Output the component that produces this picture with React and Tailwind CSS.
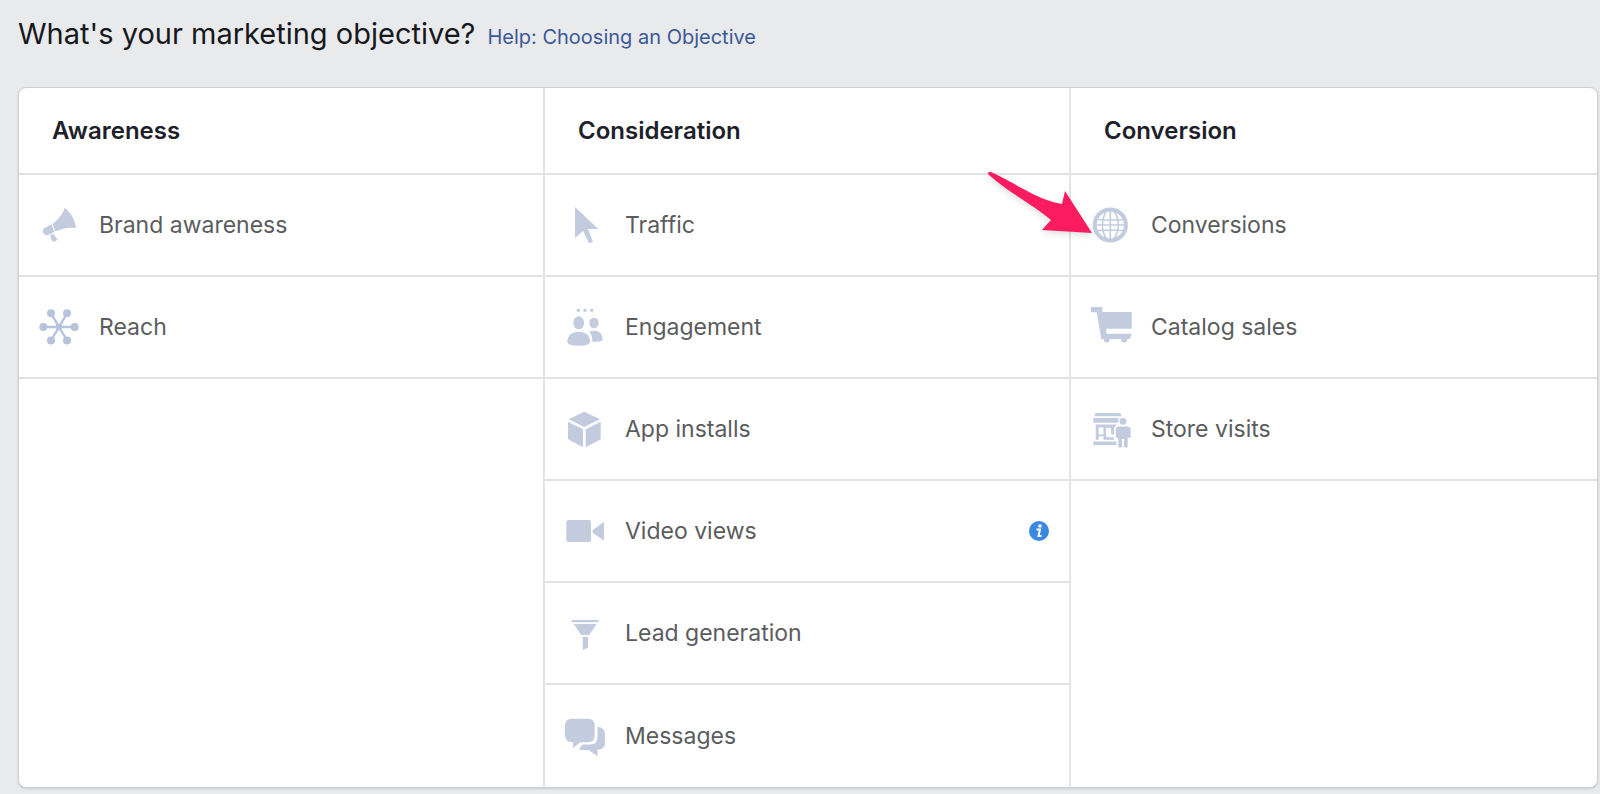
import React from 'react';

const icons = {
  megaphone: (
    <>
      <path d="M25.7 2.7C32 8 36.500 15 37 23C30 22 23 23.500 16 26.500L13.700 18.700C19 14.500 23.500 9.500 25.700 2.700Z" />
      <path d="M12.500 19.300L15.300 27L9 30Q6.500 31 5 29Q3 26.500 4 24.500Q4.500 23.500 6 22.700Z" />
      <path d="M11 30.300L14.300 28.700L18.500 34.500L15.300 37L12.700 35.500Z" />
    </>
  ),
  reach: (
    <g className="text-[#b7c3dc]" fill="currentColor">
      <path d="M4 20H36M12 6.300L28 33.500M28 6.300L12 33.500" fill="none" stroke="currentColor" strokeWidth="2.400" />
      <circle cx="20" cy="20" r="3.300" />
      <circle cx="4.300" cy="20" r="4" />
      <circle cx="35.700" cy="20" r="4" />
      <circle cx="12" cy="6.300" r="4" />
      <circle cx="28" cy="6.300" r="4" />
      <circle cx="12" cy="33.500" r="4" />
      <circle cx="28" cy="33.500" r="4" />
    </g>
  ),
  cursor: <path d="M10 2L33.300 24H23L28 36.700L24 38.300L18 26L10 33Z" />,
  people: (
    <>
      <circle cx="13.300" cy="3.300" r="1.700" />
      <circle cx="20" cy="3.300" r="1.700" />
      <circle cx="26.700" cy="3.300" r="1.700" />
      <ellipse cx="13.700" cy="15.800" rx="5.500" ry="6.500" />
      <ellipse cx="29" cy="16" rx="4.700" ry="5.200" />
      <path d="M2.300 35C2.300 28 7 24.700 13.700 24.700S25 28 25 35Q25 38.700 13.700 38.700T2.300 35Z" />
      <path d="M24 24.500C31 22.500 37.700 24.500 37.700 32.500Q37.700 35 27.300 34.700Q27.500 28 24 24.500Z" />
    </>
  ),
  cube: (
    <path d="M19.300 2.700L35 10.200L19.300 18L3.700 10.200ZM3 12.700L18 20.300V38.300L3 30.300ZM20.700 20.300L35.700 12.700V30.300L20.700 38.300Z" />
  ),
  video: (
    <>
      <rect x="1.300" y="9" width="24.700" height="22" rx="2" />
      <path d="M39 10.700V29.700L28 22Q26.700 20.300 28 18.700Z" />
    </>
  ),
  funnel: <path d="M6.700 7H33.700V9.200H6.700ZM8.700 11H31.700L24.300 22H16.300ZM17.700 23.700H23V34.700L17.700 37.300Z" />,
  messages: (
    <>
      <path d="M7 2.700H22.700Q29.700 2.700 29.700 9.700V19.300Q29.700 26.300 22.700 26.300H15.300L8 32V26.300Q0 26.300 0 19.300V9.700Q0 2.700 7 2.700Z" />
      <path d="M32.500 10.700Q40 11.500 40 18V27Q40 33 32.500 34V40L23.500 34H17Q14.300 34 14.300 32.500L18 28.500H25Q32.500 28.500 32.500 21Z" />
    </>
  ),
  globe: (
    <g fill="none" stroke="currentColor">
      <circle cx="19.300" cy="20" r="15.600" strokeWidth="4" />
      <path d="M19.300 5V35M4.500 20H34M6.500 14.500Q19.300 15.500 32 14.500M6.500 25.500Q19.300 24.500 32 25.500" strokeWidth="1.600" />
      <ellipse cx="19.300" cy="20" rx="8" ry="15" strokeWidth="1.600" />
    </g>
  ),
  cart: (
    <>
      <path d="M0 0H11.300V5H40.700V21.700H15.300V26.700H40.700L39 32H10.300L5.700 5.300H0Z" />
      <circle cx="15.700" cy="32.500" r="3" />
      <circle cx="33.300" cy="32.500" r="3" />
    </>
  ),
  store: (
    <>
      <path d="M5 4H28.500Q30 4 30.500 7.300H3.500Q4 4 5 4ZM2.300 9H28Q27 11 27.200 13.700H3.500Q2.300 13.700 2.300 12ZM2.300 32.500H25.500V36H2.300Z" />
      <path
        fillRule="evenodd"
        d="M4.700 15.500H26L24 17.500Q23 19 23 21V30.700H4.700ZM7.700 18.500V25.500H12.500V18.500ZM7.700 27.300V30.700H12.500V27.300ZM15 19V27Q15.500 28.300 17 28.300H23V26L20.500 25Q20 24.500 20 23V19Z"
      />
      <circle cx="32" cy="12.300" r="3.400" />
      <path d="M28 17.500H36Q39.700 17.500 39.700 21V28Q38.500 29.500 36.700 28.500V38Q35 39.500 33 38V30H31V38Q29 39.500 27.300 38V28.500Q26 29.500 24.700 28V21Q24.700 17.500 28 17.500Z" />
    </>
  ),
};

const columns = [
  {
    title: 'Awareness',
    items: [
      { label: 'Brand awareness', icon: 'megaphone' },
      { label: 'Reach', icon: 'reach' },
    ],
  },
  {
    title: 'Consideration',
    items: [
      { label: 'Traffic', icon: 'cursor' },
      { label: 'Engagement', icon: 'people' },
      { label: 'App installs', icon: 'cube' },
      { label: 'Video views', icon: 'video', info: true },
      { label: 'Lead generation', icon: 'funnel' },
      { label: 'Messages', icon: 'messages' },
    ],
  },
  {
    title: 'Conversion',
    items: [
      { label: 'Conversions', icon: 'globe', arrow: true },
      { label: 'Catalog sales', icon: 'cart' },
      { label: 'Store visits', icon: 'store' },
    ],
  },
];

const Objective = ({ item }) => (
  <li className="relative h-[102px] border-b-2 border-[#e0e2e3] group-nth-2:last:border-b-0">
    <button type="button" className="flex h-full w-full items-center gap-5 px-5 text-left">
      <svg viewBox="0 0 40 40" className="h-10 w-10 shrink-0 overflow-visible text-[#c3ccdf]" fill="currentColor" aria-hidden="true">
        {icons[item.icon]}
      </svg>
      <span className="grow">{item.label}</span>
      {item.info && (
        <svg viewBox="0 0 20 20" className="h-5 w-5 shrink-0" aria-label="More information">
          <circle cx="10" cy="10" r="10" fill="#3989e3" />
          <circle cx="11" cy="5" r="1.800" fill="#fff" />
          <path d="M7.500 8.500H11L9.500 15H12.500" fill="none" stroke="#fff" strokeWidth="2" />
        </svg>
      )}
    </button>
    {item.arrow && (
      <svg viewBox="0 0 108 64" className="absolute -top-1 right-full -mr-6 h-16 w-[108px] drop-shadow-md" aria-hidden="true">
        <path d="M2 1Q0 2 2 4C22 22 48 35 64 49L55 59L105 62L78 20L75 33C50 29 25 10 4 1Z" fill="#fb1b5f" />
      </svg>
    )}
  </li>
);

const App = () => {
  return (
    <main className="min-h-screen bg-[#e9eaec] pt-4 pr-0.5 pb-1 pl-[18px] font-['Inter','Liberation_Sans',sans-serif]">
      <header className="flex h-[71px] items-baseline gap-3">
        <h1 className="text-[29px] leading-9 text-[#16181c]">What's your marketing objective?</h1>
        <a href="#help" className="text-xl text-[#3b5998]">
          Help: Choosing an Objective
        </a>
      </header>

      <div className="grid grid-cols-3 rounded-lg border border-[#cfd0d2] bg-white shadow-sm">
        {columns.map((column) => (
          <section key={column.title} className="group border-r-2 border-[#e3e5e6] last:border-r-0">
            <h2 className="flex h-[87px] items-center border-b-2 border-[#e0e2e3] px-[33px] text-2xl font-semibold text-[#1d2129]">
              {column.title}
            </h2>
            <ul className="text-[23px] text-[#5b5c5e]">
              {column.items.map((item) => (
                <Objective key={item.label} item={item} />
              ))}
            </ul>
          </section>
        ))}
      </div>
    </main>
  );
};

export default App;
